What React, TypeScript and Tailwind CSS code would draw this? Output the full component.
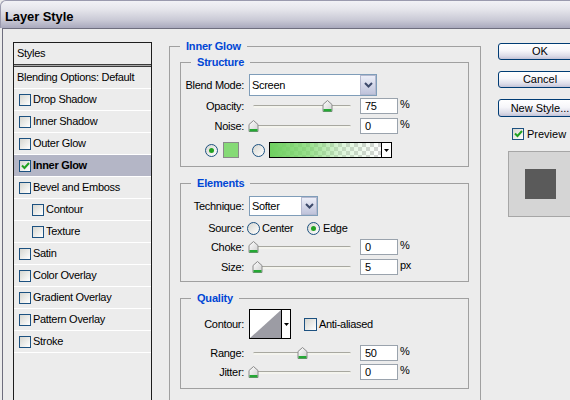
import React from "react";

function Check({ checked = false, size = 12 }: { checked?: boolean; size?: number }) {
  return (
    <span
      className={`flex shrink-0 items-center justify-center border border-[#1c5180] bg-[linear-gradient(135deg,#d6d6d0,#ffffff)] ${size === 13 ? "h-[13px] w-[13px]" : "h-[12px] w-[12px]"}`}
    >
      {checked && (
        <svg width="9" height="8" viewBox="0 0 9 8">
          <path d="M1 3.5 L3.5 6 L8 1" stroke="#21a121" strokeWidth="2" fill="none" />
        </svg>
      )}
    </span>
  );
}

function Radio({ checked = false }: { checked?: boolean }) {
  return (
    <span className="flex h-[13px] w-[13px] shrink-0 items-center justify-center rounded-full border border-[#1c5180] bg-[linear-gradient(135deg,#d6d6d0,#ffffff)]">
      {checked && <span className="h-[5px] w-[5px] rounded-full bg-[#21a121]" />}
    </span>
  );
}

function Chevron() {
  return (
    <svg width="9" height="6" viewBox="0 0 9 6">
      <path d="M1 1 L4.5 4.5 L8 1" stroke="#3d4a6b" strokeWidth="2" fill="none" />
    </svg>
  );
}

function DownTri() {
  return (
    <svg width="5" height="3" viewBox="0 0 5 3">
      <path d="M0 0 L5 0 L2.5 3 Z" fill="#000" />
    </svg>
  );
}

function Select({ value, w, h }: { value: string; w: string; h: string }) {
  return (
    <div className={`flex border border-[#7f9db9] bg-white ${w} ${h}`}>
      <div className="flex flex-1 items-center pl-[2px] text-[11px]">{value}</div>
      <div className="flex w-[16px] items-center justify-center border border-[#b5b9cf] bg-[linear-gradient(to_bottom,#eceef8,#bfc3db)]">
        <Chevron />
      </div>
    </div>
  );
}

function Slider({ value }: { value: number }) {
  return (
    <div className="relative h-[16px] w-[106px]">
      <div className="absolute left-[4px] right-[4px] top-[7px] h-[3px] rounded-full border-t border-[#a8a8a0] bg-[#f4f4ee]" />
      <svg
        className="absolute top-[2px]"
        style={{ left: `${value * 0.98 - 1}px` }}
        width="11"
        height="12"
        viewBox="0 0 11 12"
      >
        <defs>
          <linearGradient id="thumbg" x1="0" y1="0" x2="1" y2="1">
            <stop offset="0" stopColor="#ffffff" />
            <stop offset="1" stopColor="#cfcfcf" />
          </linearGradient>
        </defs>
        <path d="M1 4.5 L5.5 0.5 L10 4.5 L10 11.5 L1 11.5 Z" fill="url(#thumbg)" stroke="#8a8a8a" />
        <rect x="1.5" y="9" width="8" height="2.5" fill="#25a834" />
      </svg>
    </div>
  );
}

function NumInput({ value }: { value: string }) {
  return (
    <div className="flex h-[16px] w-[38px] items-center border border-[#9aa3ad] bg-white pl-[4px] text-[11px]">
      {value}
    </div>
  );
}

function SliderRow({ label, value, num, unit, className = "" }: { label: string; value: number; num: string; unit: string; className?: string }) {
  return (
    <div className={`flex h-[16px] items-center ${className}`}>
      <div className="w-[63px] text-right">{label}</div>
      <div className="ml-[5px]">
        <Slider value={value} />
      </div>
      <div className="ml-[5px]">
        <NumInput value={num} />
      </div>
      <div className="ml-[2px] self-start leading-[12px]">{unit}</div>
    </div>
  );
}

function Group({ title, className = "", children }: { title: string; className?: string; children?: React.ReactNode }) {
  return (
    <fieldset className={`border border-[#a0a0a0] pl-[10px] ${className}`}>
      <legend className="px-[6px] text-[11px] font-bold leading-[14px] tracking-[-0.2px] text-[#0046d5]">{title}</legend>
      {children}
    </fieldset>
  );
}

const items: { label: string; indent?: boolean; checked?: boolean; selected?: boolean }[] = [
  { label: "Drop Shadow" },
  { label: "Inner Shadow" },
  { label: "Outer Glow" },
  { label: "Inner Glow", checked: true, selected: true },
  { label: "Bevel and Emboss" },
  { label: "Contour", indent: true },
  { label: "Texture", indent: true },
  { label: "Satin" },
  { label: "Color Overlay" },
  { label: "Gradient Overlay" },
  { label: "Pattern Overlay" },
  { label: "Stroke" },
];

function Button({ children, className = "" }: { children: React.ReactNode; className?: string }) {
  return (
    <div
      className={`flex h-[17px] w-[84px] shrink-0 items-center justify-center rounded-[3px] border border-[#003c74] bg-[linear-gradient(to_bottom,#ffffff_0%,#f6f6fa_45%,#dcdce8_80%,#c2c2d6_100%)] text-[11px] ${className}`}
    >
      {children}
    </div>
  );
}

export default function App() {
  return (
    <div className="flex h-[400px] w-[570px] flex-col overflow-hidden bg-[#ececec] font-['Liberation_Sans',Arial,sans-serif] text-[11px] text-black">
      {/* Title bar */}
      <div className="flex h-[28px] shrink-0 items-center rounded-tl-[6px] border-t border-l border-[#9a9aae] bg-[linear-gradient(to_bottom,#f2f2f6_0%,#e6e6ec_30%,#cacad6_70%,#a9a9bd_100%)] pl-[4px] pt-[4px]">
        <span className="text-[13px] font-bold tracking-[-0.1px]">Layer Style</span>
      </div>

      {/* Body */}
      <div className="ml-[2px] flex flex-1 items-start border-t border-l border-[#6e6e7e] bg-[#ececec] pl-[10px]">
        {/* Styles list */}
        <div className="mt-[13px] flex h-[380px] w-[139px] shrink-0 flex-col border border-[#1e1e1e] bg-[#ececec] tracking-[-0.3px]">
          <div className="flex h-[21px] items-center pl-[3px]">Styles</div>
          <div className="h-[3px] border-y border-[#3a3a3a] bg-[#a8a8a8]" />
          <div className="flex h-[22px] items-center border-b border-white pl-[3px]">Blending Options: Default</div>
          {items.map((it) => (
            <div
              key={it.label}
              className={`flex h-[22px] items-center border-b border-white ${it.indent ? "pl-[18px]" : "pl-[5px]"} ${it.selected ? "bg-[#b4b6c6] font-bold" : ""}`}
            >
              <Check checked={it.checked} />
              <span className="ml-[2px]">{it.label}</span>
            </div>
          ))}
        </div>

        {/* Main panel */}
        <fieldset className="ml-[17px] mt-[10px] w-[312px] shrink-0 border border-[#a0a0a0] pb-[30px] pl-[10px] pr-[11px] tracking-[-0.3px]">
          <legend className="px-[6px] text-[11px] font-bold leading-[14px] tracking-[-0.2px] text-[#0046d5]">Inner Glow</legend>

          <Group title="Structure" className="mt-[2px] pb-[8px]">
            <div className="-ml-[10px]">
              <div className="mt-[5px] flex items-center">
                <div className="w-[63px] text-right">Blend Mode:</div>
                <div className="ml-[5px]">
                  <Select value="Screen" w="w-[128px]" h="h-[22px]" />
                </div>
              </div>
              <SliderRow className="mt-[2px]" label="Opacity:" value={75} num="75" unit="%" />
              <SliderRow className="mt-[4px]" label="Noise:" value={0} num="0" unit="%" />
              <div className="mt-[8px] flex h-[16px] items-center pl-[24px]">
                <Radio checked />
                <div className="ml-[5px] h-[16px] w-[16px] border border-[#8a8a8a] bg-[#86da76]" />
                <div className="ml-[13px]">
                  <Radio />
                </div>
                <div className="ml-[4px] flex h-[16px] w-[123px] border border-black bg-white">
                  <div className="flex-1 bg-[conic-gradient(#d4d4d4_25%,#ffffff_0_50%,#d4d4d4_0_75%,#ffffff_0)] bg-[length:8px_8px]">
                    <div className="h-full w-full bg-[linear-gradient(to_right,#6fd060_0%,rgba(120,214,104,0.75)_35%,rgba(160,230,150,0.35)_65%,rgba(255,255,255,0)_100%)]" />
                  </div>
                  <div className="flex w-[10px] items-center justify-center border-l border-black">
                    <DownTri />
                  </div>
                </div>
              </div>
            </div>
          </Group>

          <Group title="Elements" className="mt-[9px] pb-[6px]">
            <div className="-ml-[10px]">
              <div className="mt-[6px] flex items-center">
                <div className="w-[63px] text-right">Technique:</div>
                <div className="ml-[5px]">
                  <Select value="Softer" w="w-[69px]" h="h-[20px]" />
                </div>
              </div>
              <div className="mt-[6px] flex h-[13px] items-center">
                <div className="w-[63px] text-right">Source:</div>
                <div className="ml-[3px] flex w-[60px] items-center">
                  <Radio />
                  <span className="ml-[2px]">Center</span>
                </div>
                <div className="flex items-center">
                  <Radio checked />
                  <span className="ml-[3px]">Edge</span>
                </div>
              </div>
              <SliderRow className="mt-[4px]" label="Choke:" value={0} num="0" unit="%" />
              <SliderRow className="mt-[4px]" label="Size:" value={4} num="5" unit="px" />
            </div>
          </Group>

          <Group title="Quality" className="mt-[9px] pb-[8px]">
            <div className="-ml-[10px]">
              <div className="mt-[4px] flex h-[30px] items-center">
                <div className="w-[63px] text-right">Contour:</div>
                <div className="ml-[5px] flex h-[30px] w-[42px] border border-black bg-white">
                  <div className="flex-1">
                    <svg width="31" height="28" viewBox="0 0 31 28" className="block">
                      <path d="M0 28 L31 0 L31 28 Z" fill="#9c9ca4" />
                    </svg>
                  </div>
                  <div className="flex w-[10px] items-center justify-center border-l border-black">
                    <DownTri />
                  </div>
                </div>
                <div className="ml-[13px]">
                  <Check size={13} />
                </div>
                <span className="ml-[2px]">Anti-aliased</span>
              </div>
              <SliderRow className="mt-[6px]" label="Range:" value={50} num="50" unit="%" />
              <SliderRow className="mt-[3px]" label="Jitter:" value={0} num="0" unit="%" />
            </div>
          </Group>
        </fieldset>

        {/* Right column */}
        <div className="ml-[17px] mt-[14px] flex w-[90px] shrink-0 flex-col">
          <Button>OK</Button>
          <Button className="mt-[11px]">Cancel</Button>
          <Button className="mt-[11px] h-[18px]">New Style...</Button>
          <div className="ml-[14px] mt-[9px] flex items-center">
            <Check checked />
            <span className="ml-[3px]">Preview</span>
          </div>
          <div className="ml-[10px] mt-[8px] flex h-[66px] w-[80px] items-start border border-[#a6a6a6] bg-[#d5d5d5] pl-[16px] pt-[17px]">
            <div className="h-[30px] w-[31px] bg-[#5a5a5a]" />
          </div>
        </div>
      </div>
    </div>
  );
}
